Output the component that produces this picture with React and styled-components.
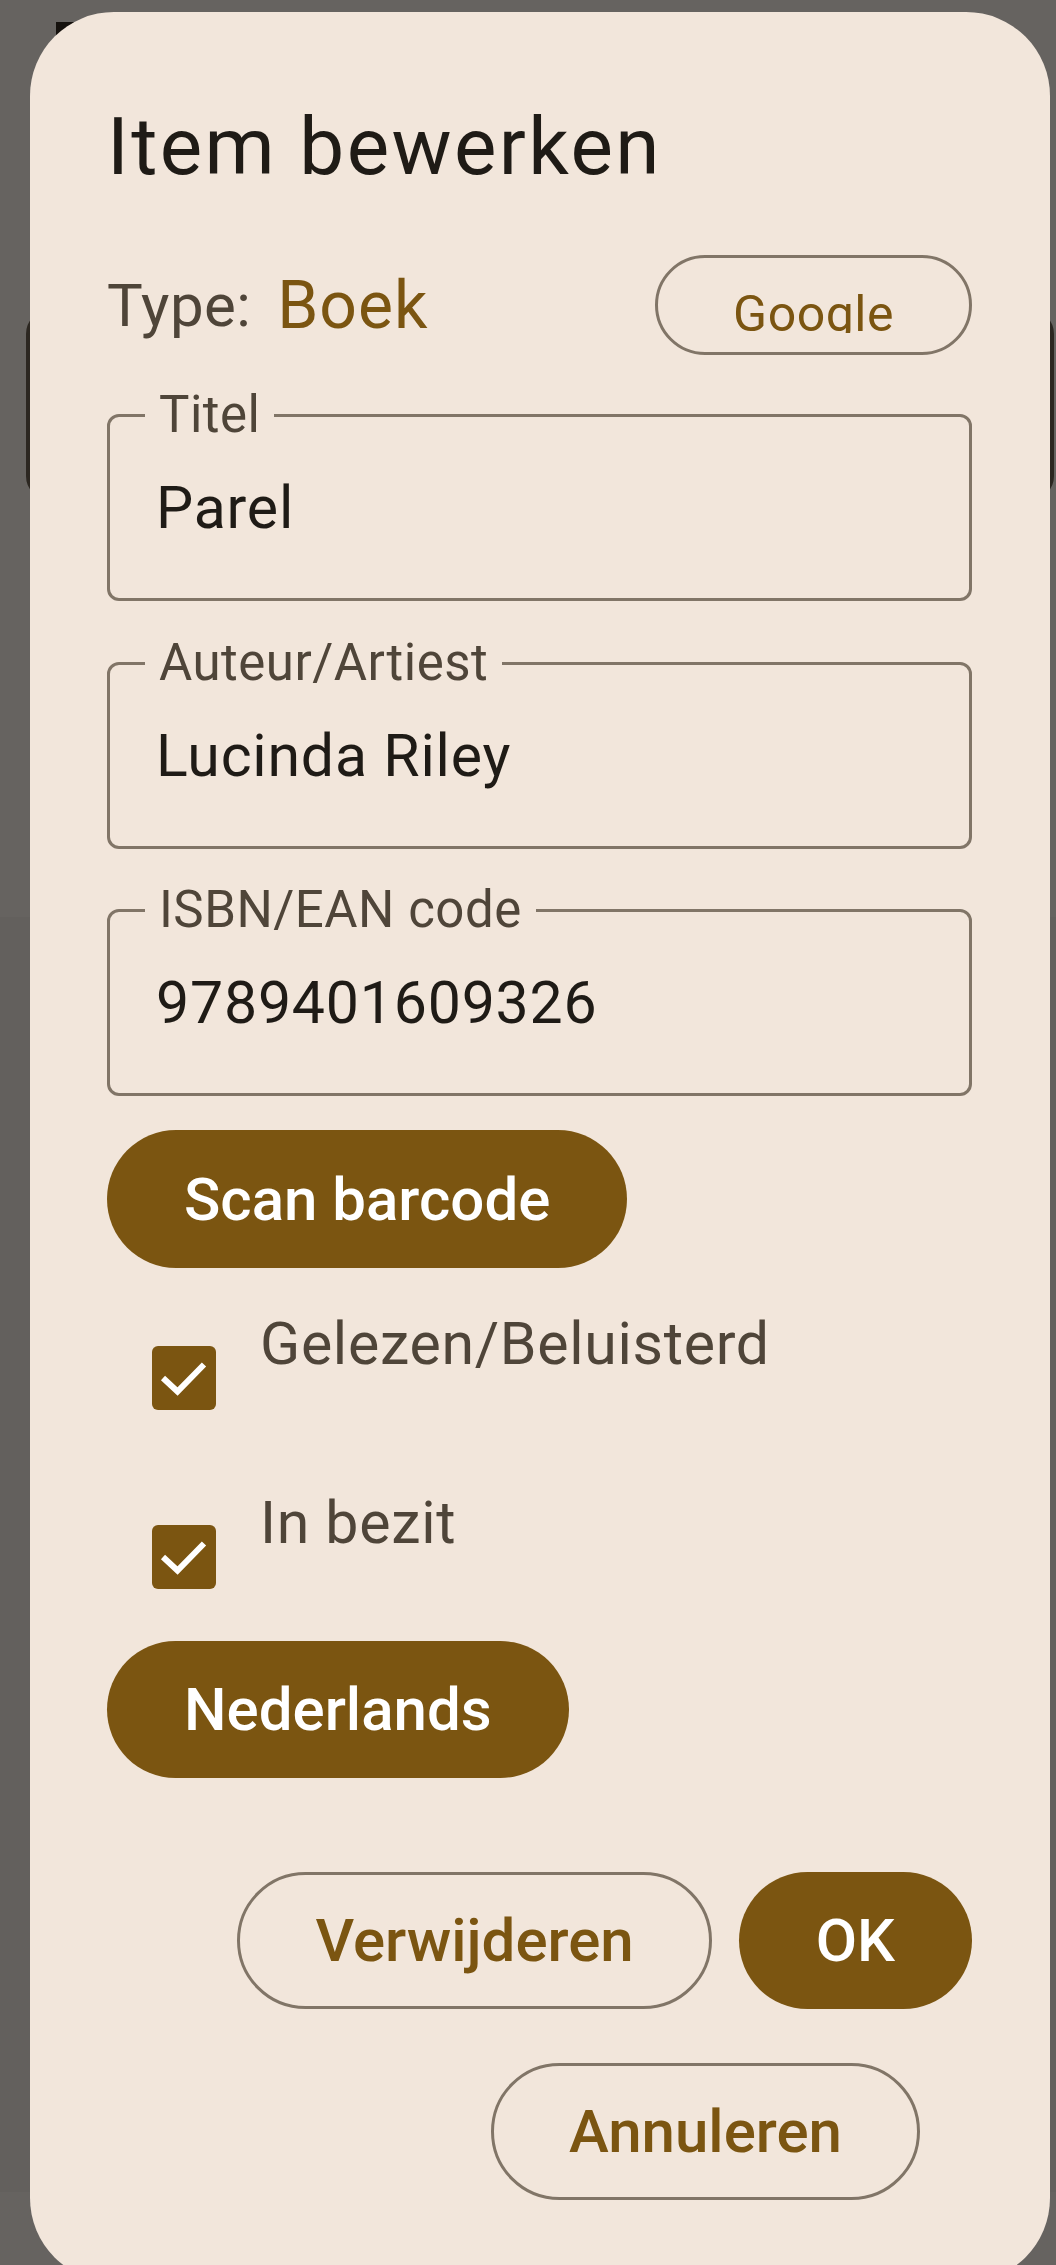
import React from "react";
import styled, { createGlobalStyle } from "styled-components";

const C = {
  scrim: "#666360",
  surface: "#f2e6db",
  primary: "#7b5511",
  onSurface: "#1f1b16",
  onSurfaceVariant: "#4f4539",
  outline: "#817567",
};

const Global = createGlobalStyle`
  html, body { margin: 0; padding: 0; background: ${C.scrim}; }
  body { font-family: Roboto, "Noto Sans", "Liberation Sans", sans-serif; }
  *, *::before, *::after { box-sizing: border-box; }
`;

const Screen = styled.div`
  position: relative;
  width: 1056px;
  height: 2265px;
  overflow: hidden;
  background: ${C.scrim};
`;

/* The app behind the scrim */
const Underlay = styled.div`
  display: flex;
  flex-direction: column;
`;
const UnderBar = styled.div`
  height: 310px;
  padding: 22px 0 0 56px;
`;
const UnderIcon = styled.div`
  width: 18px;
  height: 16px;
  background: #15110d;
`;
const UnderCard = styled.div`
  margin: 0 2px 0 26px;
  height: 190px;
  border: 4px solid #2c2721;
  border-radius: 24px;
`;
const UnderGap = styled.div`
  height: 417px;
`;
const UnderList = styled.div`
  height: 1275px;
  background: #63605d;
`;

/* Dialog */
const Dialog = styled.div`
  position: absolute;
  top: 12px;
  left: 30px;
  width: 1020px;
  background: ${C.surface};
  border-radius: 84px;
  padding: 89px 78px 82px 77px;
  display: flex;
  flex-direction: column;
`;

const Title = styled.h2`
  margin: 0;
  font-size: 80px;
  line-height: 92px;
  letter-spacing: 2.4px;
  font-weight: 400;
  color: ${C.onSurface};
`;

const TypeRow = styled.div`
  margin-top: 62px;
  height: 100px;
  display: flex;
  align-items: center;
`;
const TypeLabel = styled.span`
  font-size: 60px;
  letter-spacing: 0.4px;
  color: ${C.onSurfaceVariant};
`;
const TypeValue = styled.span`
  margin-left: 26px;
  font-size: 66px;
  letter-spacing: 1px;
  color: ${C.primary};
`;
const GoogleButton = styled.button`
  margin-left: auto;
  width: 317px;
  height: 100px;
  border: 3px solid ${C.outline};
  border-radius: 50px;
  background: transparent;
  padding: 16px 0 0;
  display: flex;
  justify-content: center;
  align-items: center;
  font-family: inherit;
`;
const ClippedLabel = styled.span`
  display: block;
  height: 39px;
  line-height: 40px;
  overflow: hidden;
  font-size: 50px;
  letter-spacing: 0.5px;
  color: ${C.primary};
`;

const Fields = styled.div`
  margin-top: 59px;
  display: flex;
  flex-direction: column;
  gap: 60.5px;
`;
const Field = styled.div`
  position: relative;
  height: 187px;
  border: 3px solid ${C.outline};
  border-radius: 12px;
  display: flex;
  align-items: center;
  padding-left: 46px;
`;
const FieldLabel = styled.span`
  position: absolute;
  left: 35px;
  top: -32px;
  padding: 0 14px;
  line-height: 60px;
  font-size: 51px;
  letter-spacing: 0.5px;
  color: ${C.onSurfaceVariant};
  background: ${C.surface};
`;
const FieldValue = styled.span`
  font-size: 59px;
  letter-spacing: 0.8px;
  color: ${C.onSurface};
`;

const FilledButton = styled.button`
  align-self: ${(p) => (p.$start ? "flex-start" : "auto")};
  margin-top: ${(p) => p.$mt || 0}px;
  height: ${(p) => p.$h || 137}px;
  padding: 0 77px;
  border: none;
  border-radius: 69px;
  background: ${C.primary};
  color: #ffffff;
  font-family: inherit;
  font-size: 60px;
  font-weight: 500;
  white-space: nowrap;
`;

const OutlinedButton = styled.button`
  height: 137px;
  padding: 0 75px;
  margin-right: ${(p) => p.$mr || 0}px;
  border: 3px solid ${C.outline};
  border-radius: 69px;
  background: transparent;
  color: ${C.primary};
  font-family: inherit;
  font-size: 60px;
  font-weight: 500;
  white-space: nowrap;
`;

const CheckList = styled.div`
  margin-top: 15px;
  display: flex;
  flex-direction: column;
`;
const CheckRow = styled.label`
  height: 179px;
  display: flex;
  align-items: flex-start;
`;
const Box = styled.span`
  margin: 63px 0 0 45px;
  width: 64px;
  height: 64px;
  flex: none;
  border-radius: 6px;
  background: ${C.primary};
  display: flex;
`;
const CheckText = styled.span`
  margin: 26px 0 0 44px;
  font-size: 59px;
  line-height: 70px;
  letter-spacing: 0.7px;
  color: ${C.onSurfaceVariant};
`;

const Actions = styled.div`
  margin-top: 94px;
  display: flex;
  flex-direction: column;
  align-items: flex-end;
  gap: 54px;
`;
const ActionRow = styled.div`
  display: flex;
  gap: 27px;
`;

const CheckMark = () => (
  <svg width="64" height="64" viewBox="0 0 64 64">
    <polyline
      points="11,32 25.5,45.5 52,18.5"
      fill="none"
      stroke="#ffffff"
      strokeWidth="6"
    />
  </svg>
);

const fields = [
  { label: "Titel", value: "Parel" },
  { label: "Auteur/Artiest", value: "Lucinda Riley" },
  { label: "ISBN/EAN code", value: "9789401609326" },
];

const checks = ["Gelezen/Beluisterd", "In bezit"];

export default function App() {
  return (
    <Screen>
      <Global />
      <Underlay>
        <UnderBar>
          <UnderIcon />
        </UnderBar>
        <UnderCard />
        <UnderGap />
        <UnderList />
      </Underlay>
      <Dialog>
        <Title>Item bewerken</Title>
        <TypeRow>
          <TypeLabel>Type:</TypeLabel>
          <TypeValue>Boek</TypeValue>
          <GoogleButton>
            <ClippedLabel>Google</ClippedLabel>
          </GoogleButton>
        </TypeRow>
        <Fields>
          {fields.map((f) => (
            <Field key={f.label}>
              <FieldLabel>{f.label}</FieldLabel>
              <FieldValue>{f.value}</FieldValue>
            </Field>
          ))}
        </Fields>
        <FilledButton $start $mt={34} $h={138}>
          Scan barcode
        </FilledButton>
        <CheckList>
          {checks.map((c) => (
            <CheckRow key={c}>
              <Box>
                <CheckMark />
              </Box>
              <CheckText>{c}</CheckText>
            </CheckRow>
          ))}
        </CheckList>
        <FilledButton $start>Nederlands</FilledButton>
        <Actions>
          <ActionRow>
            <OutlinedButton>Verwijderen</OutlinedButton>
            <FilledButton>OK</FilledButton>
          </ActionRow>
          <OutlinedButton $mr={52}>Annuleren</OutlinedButton>
        </Actions>
      </Dialog>
    </Screen>
  );
}
